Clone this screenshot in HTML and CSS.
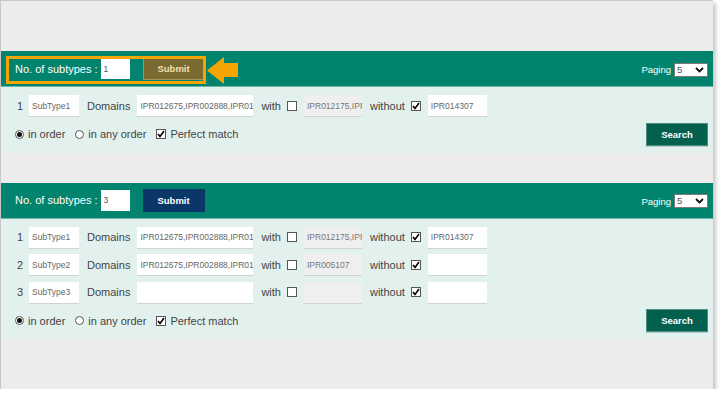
FILE: index.html
```html
<!DOCTYPE html>
<html>
<head>
<meta charset="utf-8">
<link rel="stylesheet" href="styles.css">
</head>
<body>
<div class="frame">

  <section class="panel">
    <div class="head">
      <span class="head-label">No. of subtypes :</span>
      <input class="num-input" type="text" value="1" readonly>
      <button class="submit submit-brown">Submit</button>
      <span class="spacer"></span>
      <span class="paging">Paging</span>
      <span class="select">5<svg class="chev" width="9" height="6" viewBox="0 0 9 6"><polyline points="1,1 4.5,4.5 8,1" fill="none" stroke="#111" stroke-width="1.8"/></svg></span>
      <div class="highlight"></div>
      <svg class="arrow" width="31" height="27" viewBox="0 0 31 27"><polygon points="0,13.5 17,0 17,6 31,6 31,20 17,20 17,27" fill="#f6a400"/></svg>
    </div>
    <div class="body">
      <div class="row">
        <span class="idx">1</span>
        <input class="field f-sub" type="text" value="SubType1" readonly>
        <span class="lbl">Domains</span>
        <input class="field f-dom" type="text" value="IPR012675,IPR002888,IPR012175" readonly>
        <span class="lbl">with</span>
        <span class="cb"></span>
        <input class="field f-with" type="text" value="IPR012175,IPR002888" disabled>
        <span class="lbl">without</span>
        <span class="cb checked"><svg width="8" height="8" viewBox="0 0 8 8"><polyline points="1,4 3,6.5 7,1" fill="none" stroke="#000" stroke-width="1.6"/></svg></span>
        <input class="field f-wo" type="text" value="IPR014307" readonly>
      </div>
      <div class="opts">
        <span class="radio on"></span><span class="opt-lbl">in order</span>
        <span class="radio"></span><span class="opt-lbl">in any order</span>
        <span class="cb checked"><svg width="8" height="8" viewBox="0 0 8 8"><polyline points="1,4 3,6.5 7,1" fill="none" stroke="#000" stroke-width="1.6"/></svg></span><span class="opt-lbl">Perfect match</span>
        <span class="spacer"></span>
        <button class="search">Search</button>
      </div>
    </div>
  </section>

  <section class="panel">
    <div class="head">
      <span class="head-label">No. of subtypes :</span>
      <input class="num-input" type="text" value="3" readonly>
      <button class="submit submit-navy">Submit</button>
      <span class="spacer"></span>
      <span class="paging">Paging</span>
      <span class="select">5<svg class="chev" width="9" height="6" viewBox="0 0 9 6"><polyline points="1,1 4.5,4.5 8,1" fill="none" stroke="#111" stroke-width="1.8"/></svg></span>
    </div>
    <div class="body">
      <div class="row">
        <span class="idx">1</span>
        <input class="field f-sub" type="text" value="SubType1" readonly>
        <span class="lbl">Domains</span>
        <input class="field f-dom" type="text" value="IPR012675,IPR002888,IPR012175" readonly>
        <span class="lbl">with</span>
        <span class="cb"></span>
        <input class="field f-with" type="text" value="IPR012175,IPR002888" disabled>
        <span class="lbl">without</span>
        <span class="cb checked"><svg width="8" height="8" viewBox="0 0 8 8"><polyline points="1,4 3,6.5 7,1" fill="none" stroke="#000" stroke-width="1.6"/></svg></span>
        <input class="field f-wo" type="text" value="IPR014307" readonly>
      </div>
      <div class="row">
        <span class="idx">2</span>
        <input class="field f-sub" type="text" value="SubType2" readonly>
        <span class="lbl">Domains</span>
        <input class="field f-dom" type="text" value="IPR012675,IPR002888,IPR012175" readonly>
        <span class="lbl">with</span>
        <span class="cb"></span>
        <input class="field f-with" type="text" value="IPR005107" disabled>
        <span class="lbl">without</span>
        <span class="cb checked"><svg width="8" height="8" viewBox="0 0 8 8"><polyline points="1,4 3,6.5 7,1" fill="none" stroke="#000" stroke-width="1.6"/></svg></span>
        <input class="field f-wo" type="text" value="" readonly>
      </div>
      <div class="row">
        <span class="idx">3</span>
        <input class="field f-sub" type="text" value="SubType3" readonly>
        <span class="lbl">Domains</span>
        <input class="field f-dom" type="text" value="" readonly>
        <span class="lbl">with</span>
        <span class="cb"></span>
        <input class="field f-with" type="text" value="" disabled>
        <span class="lbl">without</span>
        <span class="cb checked"><svg width="8" height="8" viewBox="0 0 8 8"><polyline points="1,4 3,6.5 7,1" fill="none" stroke="#000" stroke-width="1.6"/></svg></span>
        <input class="field f-wo" type="text" value="" readonly>
      </div>
      <div class="opts">
        <span class="radio on"></span><span class="opt-lbl">in order</span>
        <span class="radio"></span><span class="opt-lbl">in any order</span>
        <span class="cb checked"><svg width="8" height="8" viewBox="0 0 8 8"><polyline points="1,4 3,6.5 7,1" fill="none" stroke="#000" stroke-width="1.6"/></svg></span><span class="opt-lbl">Perfect match</span>
        <span class="spacer"></span>
        <button class="search">Search</button>
      </div>
    </div>
  </section>

</div>
</body>
</html>
```
FILE: styles.css
```css
* { box-sizing: border-box; }
body {
  margin: 0;
  background: #ffffff;
  font-family: "Liberation Sans", Arial, sans-serif;
}
.frame {
  width: 713px;
  height: 389px;
  border-top: 1px solid #c8c8c8;
  border-left: 1px solid #c8c8c8;
  background: #ececec;
  box-shadow: 3px 3px 4px rgba(0,0,0,0.22);
  padding-top: 50px;
}
.panel + .panel { margin-top: 30px; }

.head {
  position: relative;
  height: 36px;
  background: #01836d;
  border-bottom: 1px solid #6fb6a6;
  display: flex;
  align-items: center;
  padding: 0 5px 0 14px;
}
.head-label {
  color: #ffffff;
  font-size: 11px;
}
.num-input {
  margin: 0 0 0 3px;
  width: 29px;
  height: 21px;
  background: #fff;
  border: none;
  outline: none;
  color: #555;
  font-family: "Liberation Sans", Arial, sans-serif;
  font-size: 8.5px;
  padding: 0 3px;
}
.submit {
  margin-left: 13px;
  width: 62px;
  height: 23px;
  font-family: "Liberation Sans", Arial, sans-serif;
  font-weight: bold;
  font-size: 9.5px;
  padding: 0;
  cursor: pointer;
}
.submit-brown {
  background: #7a6930;
  border: 1px solid #a4955a;
  color: #f4dfae;
}
.submit-navy {
  background: #0b3768;
  border: 1px solid #0b3768;
  color: #ffffff;
}
.spacer { flex: 1; }
.paging {
  color: #ffffff;
  font-size: 9.5px;
  margin-right: 3px;
  margin-top: 2px;
}
.select {
  width: 34px;
  height: 14px;
  margin-top: 2px;
  background: #fff;
  border: 1px solid #7a7a7a;
  color: #555;
  font-size: 9.5px;
  line-height: 12px;
  padding-left: 2px;
  display: flex;
  align-items: center;
  justify-content: space-between;
  padding-right: 3px;
}
.highlight {
  position: absolute;
  left: 5px;
  top: 5px;
  width: 200px;
  height: 28px;
  border: 3px solid #f6a400;
}
.arrow {
  position: absolute;
  left: 206px;
  top: 6px;
}

.body {
  background: #e3f1ee;
  padding: 8px 5px 7px 14px;
}
.row {
  display: flex;
  align-items: center;
  height: 21px;
  margin-bottom: 6.5px;
}
.row:last-of-type { margin-bottom: 6px; }
.idx {
  color: #444;
  font-size: 11px;
  margin-left: 2px;
  width: 6px;
  margin-right: 6px;
}
.lbl {
  color: #444;
  font-size: 11px;
  margin-left: 8px;
}
.field {
  height: 21px;
  margin: 0;
  border: none;
  outline: none;
  background: #fff;
  box-shadow: 0 1px 0 #cfd3d2;
  color: #666;
  font-family: "Liberation Sans", Arial, sans-serif;
  font-size: 8.5px;
  padding: 0 0 0 3px;
}
.lbl + .field { margin-left: 7px; }
.field:disabled { background: #efefef; color: #777; }
.f-sub { width: 50px; }
.f-dom { width: 116px; }
.f-with { width: 58px; margin-left: 7px; }
.f-wo { width: 59px; margin-left: 7px; }
.cb {
  width: 10px;
  height: 10px;
  border: 1px solid #555;
  background: #fff;
  margin-left: 6px;
  display: flex;
  align-items: center;
  justify-content: center;
}
.opts {
  display: flex;
  align-items: center;
  height: 23px;
}
.opts .cb { margin-left: 10px; }
.radio {
  width: 9px;
  height: 9px;
  border: 1px solid #555;
  border-radius: 50%;
  background: #fff;
  display: flex;
  align-items: center;
  justify-content: center;
}
.radio + .opt-lbl { margin-left: 4px; }
.cb + .opt-lbl { margin-left: 4px; }
.opt-lbl + .radio { margin-left: 10px; }
.radio.on::after {
  content: "";
  width: 5px;
  height: 5px;
  border-radius: 50%;
  background: #111;
}
.opt-lbl {
  color: #444;
  font-size: 11px;
}
.search {
  width: 62px;
  height: 23px;
  background: #03604f;
  border: 1px solid #4f8f80;
  box-shadow: 0 1px 0 #b7cbc6;
  color: #fff;
  font-family: "Liberation Sans", Arial, sans-serif;
  font-weight: bold;
  font-size: 9.5px;
  padding: 0;
}
```
